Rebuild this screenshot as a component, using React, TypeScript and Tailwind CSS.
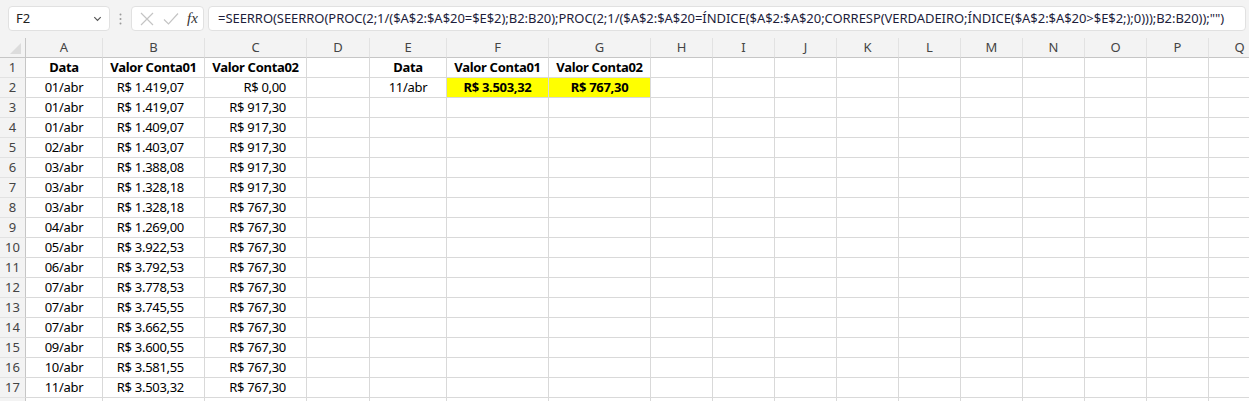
import React from 'react';

const cols = [
  { name: 'A', w: 77 },
  { name: 'B', w: 102 },
  { name: 'C', w: 102 },
  { name: 'D', w: 63 },
  { name: 'E', w: 77 },
  { name: 'F', w: 102 },
  { name: 'G', w: 102 },
  { name: 'H', w: 62 },
  { name: 'I', w: 62 },
  { name: 'J', w: 62 },
  { name: 'K', w: 62 },
  { name: 'L', w: 62 },
  { name: 'M', w: 62 },
  { name: 'N', w: 62 },
  { name: 'O', w: 62 },
  { name: 'P', w: 62 },
  { name: 'Q', w: 62 },
];

const datas = [
  '01/abr', '01/abr', '01/abr', '02/abr', '03/abr', '03/abr', '03/abr', '04/abr',
  '05/abr', '06/abr', '07/abr', '07/abr', '07/abr', '09/abr', '10/abr', '11/abr',
];

const conta01 = [
  '1.419,07', '1.419,07', '1.409,07', '1.403,07', '1.388,08', '1.328,18', '1.328,18', '1.269,00',
  '3.922,53', '3.792,53', '3.778,53', '3.745,55', '3.662,55', '3.600,55', '3.581,55', '3.503,32',
];

const conta02 = [
  '0,00', '917,30', '917,30', '917,30', '917,30', '917,30', '767,30', '767,30',
  '767,30', '767,30', '767,30', '767,30', '767,30', '767,30', '767,30', '767,30',
];

const formula =
  '=SEERRO(SEERRO(PROC(2;1/($A$2:$A$20=$E$2);B2:B20);PROC(2;1/($A$2:$A$20=ÍNDICE($A$2:$A$20;CORRESP(VERDADEIRO;ÍNDICE($A$2:$A$20>$E$2;);0)));B2:B20));"")';

type Cell = { text?: string; align?: 'c' | 'r'; bold?: boolean; yellow?: boolean };

function getCell(row: number, col: number): Cell {
  if (row === 1) {
    if (col === 0 || col === 4) return { text: 'Data', align: 'c', bold: true };
    if (col === 1 || col === 5) return { text: 'Valor Conta01', align: 'c', bold: true };
    if (col === 2 || col === 6) return { text: 'Valor Conta02', align: 'c', bold: true };
    return {};
  }
  const i = row - 2;
  if (i >= 0 && i < 16) {
    if (col === 0) return { text: datas[i], align: 'c' };
    if (col === 1) return { text: 'R$ ' + conta01[i], align: 'r' };
    if (col === 2) return { text: 'R$ ' + conta02[i], align: 'r' };
  }
  if (row === 2) {
    if (col === 4) return { text: '11/abr', align: 'c' };
    if (col === 5) return { text: 'R$ 3.503,32', align: 'c', bold: true, yellow: true };
    if (col === 6) return { text: 'R$ 767,30', align: 'c', bold: true, yellow: true };
  }
  return {};
}

function FormulaBar() {
  return (
    <div className="flex h-[38px] items-start bg-[#f3f3f3] pt-[6px]">
      <div className="ml-[8px] flex h-[25px] w-[102px] items-center justify-between rounded-[4px] border border-[#e1e1e1] bg-white pl-[7px] pr-[6px] text-[13px] text-[#222]">
        <span>F2</span>
        <svg width="11" height="11" viewBox="0 0 12 12" fill="none" stroke="#555" strokeWidth="1.3">
          <path d="M2.5 4.5 6 8l3.5-3.5" />
        </svg>
      </div>
      <div className="flex h-[25px] w-[21px] items-center justify-center">
        <svg width="3" height="12" viewBox="0 0 3 12" fill="#9a9a9a">
          <circle cx="1.5" cy="1.5" r="1" />
          <circle cx="1.5" cy="6" r="1" />
          <circle cx="1.5" cy="10.5" r="1" />
        </svg>
      </div>
      <div className="flex h-[25px] w-[73px] items-center rounded-[4px] border border-[#e1e1e1] bg-white pl-[8px]">
        <svg width="14" height="14" viewBox="0 0 14 14" fill="none" stroke="#c4c4c4" strokeWidth="1.2">
          <path d="M1 1l12 12M13 1 1 13" />
        </svg>
        <svg className="ml-[9px]" width="16" height="14" viewBox="0 0 16 14" fill="none" stroke="#c4c4c4" strokeWidth="1.2">
          <path d="M1 7.5l4.5 4.5L15 1.5" />
        </svg>
        <span className="ml-[8px] text-[15px] italic text-[#333]" style={{ fontFamily: '"Liberation Serif", serif' }}>
          fx
        </span>
      </div>
      <div className="ml-[4px] mr-[3px] flex h-[25px] flex-1 items-center overflow-hidden whitespace-nowrap rounded-[4px] border border-[#e1e1e1] bg-white pl-[9px] text-[13px] tracking-[-0.05px] text-[#1d1d3b]">
        {formula}
      </div>
    </div>
  );
}

export default function App() {
  const rows = Array.from({ length: 18 }, (_, i) => i + 1);
  const template = '26px ' + cols.map((c) => c.w + 'px').join(' ');

  return (
    <div
      className="h-[401px] w-[1249px] overflow-hidden bg-white"
      style={{ fontFamily: '"Noto Sans", "Liberation Sans", sans-serif' }}
    >
      <FormulaBar />
      <div className="grid" style={{ gridTemplateColumns: template, gridAutoRows: '20px' }}>
        <div className="relative border-b border-r border-[#c6c6c6] bg-[#f3f3f3]">
          <svg className="absolute bottom-[3px] right-[4px]" width="11" height="11" viewBox="0 0 11 11">
            <path d="M11 0v11H0z" fill="#dcdcdc" />
          </svg>
        </div>
        {cols.map((c) => (
          <div
            key={c.name}
            className="flex items-center justify-center border-b border-r border-b-[#c6c6c6] border-r-[#e2e2e2] bg-[#f3f3f3] text-[13px] text-[#444]"
          >
            {c.name}
          </div>
        ))}
        {rows.map((r) => (
          <React.Fragment key={r}>
            <div className="flex items-center justify-center border-b border-r border-b-[#e2e2e2] border-r-[#c6c6c6] bg-[#f3f3f3] text-[13px] text-[#444]">
              {r < 18 ? r : ''}
            </div>
            {cols.map((c, ci) => {
              const cell = getCell(r, ci);
              return (
                <div
                  key={c.name}
                  className={
                    'flex items-end overflow-hidden whitespace-nowrap border-b border-r border-[#d9d9d9] pb-[1px] text-[13px] leading-[17px] tracking-[-0.3px] text-black ' +
                    (cell.align === 'r' ? 'justify-end pr-[20px] ' : 'justify-center ') +
                    (cell.bold ? 'font-bold ' : '') +
                    (cell.yellow ? 'bg-[#ffff00] ' : '')
                  }
                >
                  {cell.text}
                </div>
              );
            })}
          </React.Fragment>
        ))}
      </div>
    </div>
  );
}
